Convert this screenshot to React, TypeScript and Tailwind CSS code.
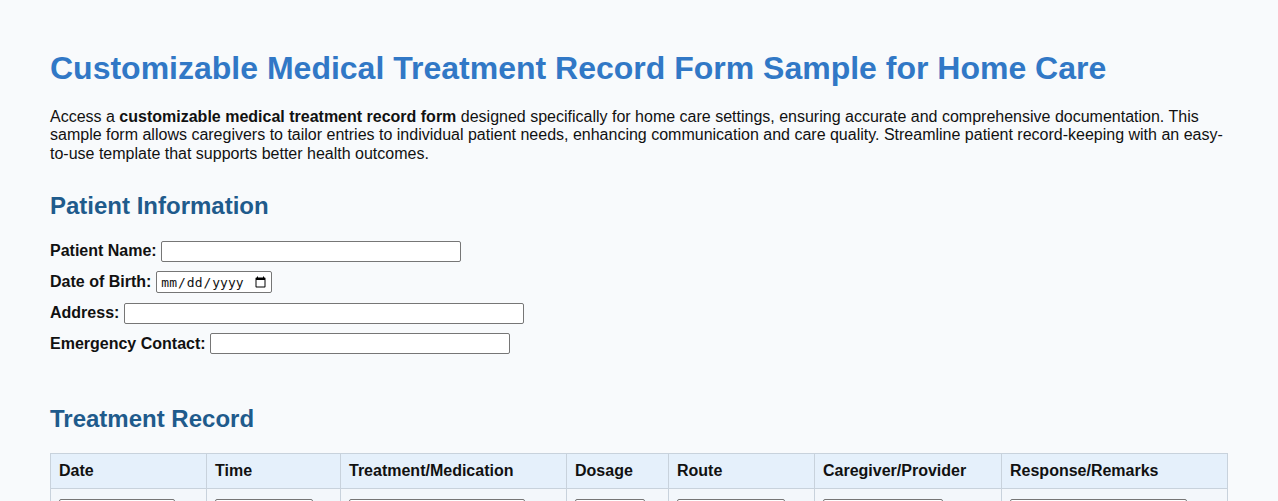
import React from "react";

const inputCls =
  "h-[21px] border border-[#767676] rounded-[2px] bg-white px-[2px] text-[13px] outline-none";

const cols = [
  { name: "Date", w: 156, iw: 116, type: "date" },
  { name: "Time", w: 134, iw: 98, type: "time" },
  { name: "Treatment/Medication", w: 226, iw: 176, type: "text" },
  { name: "Dosage", w: 102, iw: 70, type: "text" },
  { name: "Route", w: 146, iw: 108, type: "text" },
  { name: "Caregiver/Provider", w: 187, iw: 120, type: "text" },
  { name: "Response/Remarks", w: 226, iw: 177, type: "text" },
];

export default function App() {
  return (
    <div
      className="min-h-screen bg-[#f8fafc] px-[50px] pt-[50px] pb-10 text-[#111]"
      style={{ fontFamily: '"Liberation Sans", Arial, sans-serif' }}
    >
      <h1 className="text-[32px] leading-[37px] font-bold text-[#3178c6]">
        Customizable Medical Treatment Record Form Sample for Home Care
      </h1>
      <p className="mt-[21px] text-[16px] leading-[18.4px] text-[#111]">
        Access a <strong>customizable medical treatment record form</strong> designed specifically for home
        care settings, ensuring accurate and comprehensive documentation. This sample form allows caregivers
        to tailor entries to individual patient needs, enhancing communication and care quality. Streamline
        patient record-keeping with an easy-to-use template that supports better health outcomes.
      </p>

      <h2 className="mt-[29px] text-[24px] leading-[27.6px] font-bold text-[#1f5b8c]">Patient Information</h2>
      <div className="mt-[21px] flex flex-col gap-[9.5px] text-[16px]">
        <div className="flex items-center h-[21px]">
          <label className="font-bold mr-[4px]">Patient Name:</label>
          <input type="text" className={`${inputCls} w-[300px]`} />
        </div>
        <div className="flex items-center h-[22px]">
          <label className="font-bold mr-[5px]">Date of Birth:</label>
          <input
            type="date"
            className="h-[22px] w-[116px] border border-[#767676] rounded-[2px] bg-white pl-[3px] pr-[2px] text-[13px]"
            style={{ fontFamily: '"DejaVu Sans Mono", monospace' }}
          />
        </div>
        <div className="flex items-center h-[21px]">
          <label className="font-bold mr-[5px]">Address:</label>
          <input type="text" className={`${inputCls} w-[400px]`} />
        </div>
        <div className="flex items-center h-[21px]">
          <label className="font-bold mr-[4px]">Emergency Contact:</label>
          <input type="text" className={`${inputCls} w-[300px]`} />
        </div>
      </div>

      <h2 className="mt-[51px] text-[24px] leading-[27.6px] font-bold text-[#1f5b8c]">Treatment Record</h2>
      <table className="mt-[20px] w-[1178px] table-fixed border-collapse text-[16px]">
        <colgroup>
          {cols.map((c) => (
            <col key={c.name} style={{ width: c.w }} />
          ))}
        </colgroup>
        <thead>
          <tr className="bg-[#e5f0fb]">
            {cols.map((c) => (
              <th
                key={c.name}
                className="border border-[#c8d2dc] px-[8px] py-[8px] text-left font-bold leading-[18px]"
              >
                {c.name}
              </th>
            ))}
          </tr>
        </thead>
        <tbody>
          <tr className="bg-[#f3f7fb]">
            {cols.map((c) => (
              <td key={c.name} className="border border-[#c8d2dc] px-[8px] py-[8px] align-top">
                <input
                  type={c.type}
                  className="h-[21px] border border-[#767676] rounded-[2px] bg-white px-[2px] text-[13px]"
                  style={{ width: c.iw, fontFamily: '"DejaVu Sans Mono", monospace' }}
                />
              </td>
            ))}
          </tr>
        </tbody>
      </table>
    </div>
  );
}
